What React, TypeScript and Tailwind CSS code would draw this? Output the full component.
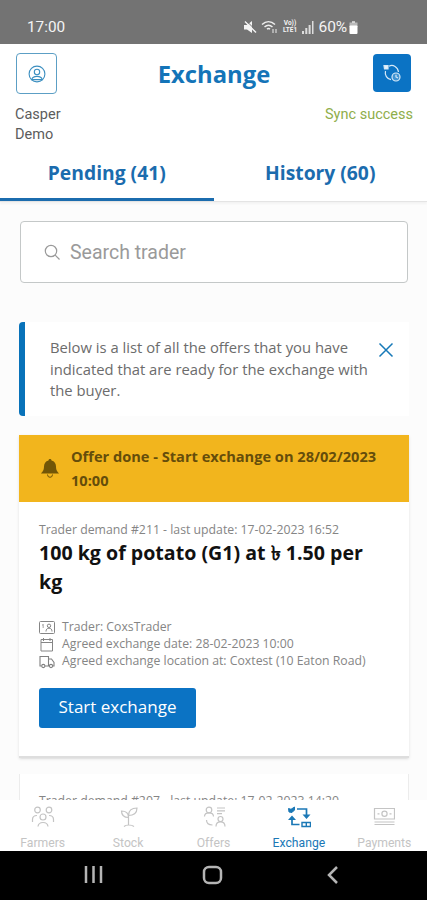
import { ReactNode, useState } from 'react';

type IconProps = { className?: string };

const UserIcon = () => (
  <svg width="18" height="18" viewBox="0 0 18 18" fill="none" stroke="#3c8fc0" strokeWidth="1.1">
    <circle cx="9" cy="9" r="7.9" />
    <circle cx="9" cy="7" r="2.7" />
    <path d="M3.8 14.6c.5-2.4 2.4-3.2 5.2-3.2s4.700.8 5.200 3.200z" />
  </svg>
);

const SyncIcon = () => (
  <svg width="20" height="20" viewBox="0 0 20 20" fill="none" stroke="#d6e9f7" strokeWidth="1.2">
    <path d="M7 3.200C11 1 16 4 16.500 9M3.500 8c-1 4 1.500 8 5.500 8.600" />
    <path d="M2 2.500h4v3.500H2.500z" fill="#e4f1fb" />
    <circle cx="14" cy="14" r="4" fill="#3f93d3" />
    <path d="M14 11.800V14l2 1" />
  </svg>
);

const FarmersIcon = ({ className }: IconProps) => (
  <svg className={className} width="24" height="22" viewBox="0 0 24 22" fill="none" stroke="currentColor" strokeWidth="1.2">
    <circle cx="6.500" cy="4" r="2.800" />
    <circle cx="18" cy="4" r="2.800" />
    <circle cx="12" cy="11" r="3" />
    <path d="M1.500 16v-2.500c0-2.500 1.500-4 4.500-4M22.500 16v-2.500c0-2.500-1.500-4-4.500-4M7 20.500c.3-2.700 2-4 5-4s4.700 1.300 5 4" />
  </svg>
);

const StockIcon = ({ className }: IconProps) => (
  <svg className={className} width="20" height="22" viewBox="0 0 20 22" fill="none" stroke="currentColor" strokeWidth="1.2">
    <path d="M10.500 19V9M10.500 11.500C6 11.500 3.500 9 3.500 5c4.500 0 7 2.500 7 6.500zM10.500 9.500c0-5 3-7.500 8.500-7.500 0 5.500-3.500 7.500-8.500 7.500zM6 20.500c2-2 7.500-2 10 0" />
  </svg>
);

const OffersIcon = ({ className }: IconProps) => (
  <svg className={className} width="24" height="22" viewBox="0 0 24 22" fill="none" stroke="currentColor" strokeWidth="1.2">
    <circle cx="7" cy="4" r="2.800" />
    <path d="M2.500 10.500c0-2.500 1.500-3.700 4.500-3.700s4.500 1.200 4.500 3.700M15 2h8M15 4.800h8M15 7.600h5" />
    <circle cx="18.500" cy="13" r="2.500" />
    <path d="M14 20.500c0-3 1.500-4.700 4.500-4.700s4.500 1.700 4.500 4.700M4.500 14c0 3.500 2 5 6 5" />
  </svg>
);

const ExchangeIcon = ({ className }: IconProps) => (
  <svg className={className} width="24" height="22" viewBox="0 0 24 22" fill="none" stroke="currentColor" strokeWidth="1.700">
    <path d="M10 3h9.500v7M5 13v5.500h7.500" />
    <path d="M15.500 8.500h8l-4 4.500zM1 14l4-4.500L9 14z" fill="currentColor" stroke="none" />
    <path d="M1.500 2.500l2.500.8L7.500 1v3L5 6.500 2 6z" fill="currentColor" strokeWidth="1" />
    <path d="M15 16.500h8.500v4H15zM19.300 16.500v4" strokeWidth="1.400" />
  </svg>
);

const PaymentsIcon = ({ className }: IconProps) => (
  <svg className={className} width="22" height="22" viewBox="0 0 22 22" fill="none" stroke="currentColor" strokeWidth="1.200">
    <path d="M1.500 2.500h20V13h-20zM1.500 16h20M1.500 18.500h20M4.500 7.800h2M16.500 7.800h2" />
    <circle cx="11.500" cy="7.800" r="2.600" />
  </svg>
);

const TraderIcon = () => (
  <svg width="16" height="14" viewBox="0 0 16 14" fill="none" stroke="#858585" strokeWidth="1">
    <rect x=".5" y=".5" width="15" height="12" rx="1" />
    <circle cx="10" cy="4.800" r="1.700" />
    <path d="M7 10.500c0-2 1-3.300 3-3.300s3 1.300 3 3.300M3 4h2M3.500 6h1.500" />
  </svg>
);

const CalendarIcon = () => (
  <svg width="16" height="14" viewBox="0 0 16 14" fill="none" stroke="#858585" strokeWidth="1">
    <path d="M2 1.500h11.500v11.500H2zM2 4.500h11.500M4.500 0v3M11 0v3" />
  </svg>
);

const TruckIcon = () => (
  <svg width="16" height="14" viewBox="0 0 16 14" fill="none" stroke="#808080" strokeWidth="1.100">
    <path d="M2.500 11H1V1.500h8.500V11H6M9.500 4h3L15 7.500V11h-1" />
    <circle cx="4.300" cy="11" r="1.600" />
    <circle cx="12" cy="11" r="1.600" />
  </svg>
);

const StatusBar = () => (
  <div className="h-11 shrink-0 bg-[#737373] flex items-center justify-between pl-[27px] pr-[69px] pt-[10px] text-[#f4f4f4]">
    <span className="text-[15.3px] leading-5">17:00</span>
    <div className="flex items-center">
      <svg width="14" height="14" viewBox="0 0 14 14" fill="#f4f4f4">
        <path d="M1 5h3l5-4v12L4 9.500H1z" />
        <path d="M2 1.500l11 11" stroke="#f4f4f4" strokeWidth="1.400" />
        <path d="M3.500 1l9.500 9.500" stroke="#737373" strokeWidth="1" />
      </svg>
      <svg className="ml-[4px]" width="17" height="14" viewBox="0 0 17 14" fill="none" stroke="#eee" strokeWidth="1.500">
        <path d="M1 4.500C5 .8 10 .8 14 4.500M3.500 7c2.500-2.200 5.500-2.200 8 0M6 9.200c1-.8 2-.8 3 0" />
        <path d="M12 9v4M15 9v4" strokeWidth="1" />
      </svg>
      <div className="ml-[4px] w-[17px] text-center text-[6.5px] font-bold">
        <div className="h-[7px] leading-[7px]">Vo))</div>
        <div className="h-[7px] leading-[7px]">LTE1</div>
      </div>
      <svg className="ml-[3px]" width="12" height="13" viewBox="0 0 12 13" fill="#ddd">
        <path d="M0 10h2v3H0zM3.300 7h2v6h-2zM6.600 4h2v9h-2zM10 0h1.500v13H10z" />
      </svg>
      <span className="ml-[5px] text-[15.5px] leading-5 tracking-[-0.1px]">60%</span>
      <svg className="ml-[2px]" width="9" height="13" viewBox="0 0 9 13" fill="#fff">
        <path d="M3 0h3v2H3z" opacity=".6" />
        <path d="M.5 1.500h8V6h-8z" opacity=".5" />
        <rect x=".5" y="4.500" width="8" height="8.500" rx="1" />
      </svg>
    </div>
  </div>
);

const Detail = ({ icon, children }: { icon: ReactNode; children: ReactNode }) => (
  <div className="flex items-center h-[17px]">
    {icon}
    <span className="ml-[7px] text-[12.26px] whitespace-nowrap">{children}</span>
  </div>
);

const navItems = [
  { name: 'Farmers', Icon: FarmersIcon },
  { name: 'Stock', Icon: StockIcon },
  { name: 'Offers', Icon: OffersIcon },
  { name: 'Exchange', Icon: ExchangeIcon },
  { name: 'Payments', Icon: PaymentsIcon },
];

const App = () => {
  const [tab, setTab] = useState('pending');
  const [showInfo, setShowInfo] = useState(true);

  return (
    <div className="w-[427px] h-[900px] flex flex-col overflow-hidden bg-[#fcfcfc] font-[Roboto,sans-serif]">
      <StatusBar />
      <header className="h-[102px] shrink-0 bg-white flex justify-between pl-[15px] pr-[14px] pt-[9px]">
        <div className="w-[100px]">
          <button className="ml-[1px] size-[41px] border border-[#5c9fc5] rounded-[4px] flex items-center justify-center">
            <UserIcon />
          </button>
          <p className="mt-[11px] w-[60px] text-[14.5px] leading-5 text-[#5c5c5c]">
            Casper Demo
          </p>
        </div>
        <h1 className="pt-[4px] font-['Open_Sans','Noto_Sans',sans-serif] font-bold text-[23.8px] leading-[34px] text-[#1474b8]">
          Exchange
        </h1>
        <div className="w-[100px] flex flex-col items-end">
          <button className="mt-[1px] mr-[2px] size-[38px] bg-[#0b73c4] rounded-[4px] flex items-center justify-center">
            <SyncIcon />
          </button>
          <p className="mt-[13px] text-[14.5px] leading-5 whitespace-nowrap text-[#8fae4b]">
            Sync success
          </p>
        </div>
      </header>
      <div className="h-[56px] shrink-0 flex bg-white border-b border-[#e4e4e4] shadow-[0_2px_2px_rgba(0,0,0,0.04)] font-['Open_Sans','Noto_Sans',sans-serif] font-bold text-[19.3px] text-[#1b6cae]">
        <button
          className={`flex-1 pt-[2px] border-b-[3px] ${tab === 'pending' ? 'border-[#1b6cae]' : 'border-transparent'}`}
          onClick={() => setTab('pending')}
        >
          Pending (41)
        </button>
        <button
          className={`flex-1 pt-[2px] border-b-[3px] ${tab === 'history' ? 'border-[#1b6cae]' : 'border-transparent'}`}
          onClick={() => setTab('history')}
        >
          History (60)
        </button>
      </div>
      <main className="flex-1 min-h-0 overflow-hidden pl-[19px] pr-[18px] pt-[19px] font-['Open_Sans','Noto_Sans',sans-serif]">
        <div className="mx-[1px] h-[62px] border border-[#c4c8c8] rounded-[4px] bg-white flex items-center pl-[23px] text-[#9a9a9a]">
          <svg width="17" height="17" viewBox="0 0 17 17" fill="none" stroke="currentColor" strokeWidth="1.200">
            <circle cx="7" cy="7" r="5.700" />
            <path d="M11.200 11.200l4.300 4.300" />
          </svg>
          <span className="ml-[9px] pt-[1px] font-[Roboto,sans-serif] text-[19.5px]">Search trader</span>
        </div>
        {showInfo && (
          <div className="mt-[39px] h-[94px] bg-white border-l-[6px] border-[#0872b9] rounded-l-[4px] flex justify-between pl-[25px] pr-[15px] pt-[15px]">
            <p className="w-[325px] text-[14.8px] leading-[21.700px] text-[#6c6c6c]">
              Below is a list of all the offers that you have indicated that are ready for the exchange with the buyer.
            </p>
            <button className="mt-[5px] h-[16px]" onClick={() => setShowInfo(false)}>
              <svg width="16" height="16" viewBox="0 0 16 16" stroke="#1779b8" strokeWidth="1.500">
                <path d="M1.500 1.500l13 13M14.500 1.500l-13 13" />
              </svg>
            </button>
          </div>
        )}
        <div className="mt-[19px] h-[323px] bg-white border-b-2 border-[#dedede] shadow-sm">
          <div className="h-[67px] bg-[#f2b51d] flex items-center pb-[2px] pl-[21px] text-[#654d0b]">
            <svg className="mt-[2px]" width="20" height="22" viewBox="0 0 20 22" fill="#725607">
              <path d="M10 1c1 0 1.500.6 1.500 1.500 3 .7 4.500 3 4.500 6 0 4 1.500 5 3 7H1c1.500-2 3-3 3-7 0-3 1.500-5.300 4.500-6C8.500 1.600 9 1 10 1z" />
              <path d="M7.500 16.500a2.500 2.800 0 0 0 5 0" fill="none" stroke="#725607" />
            </svg>
            <p className="ml-[11px] w-[320px] font-bold text-[14.6px] leading-6">
              Offer done - Start exchange on 28/02/2023 10:00
            </p>
          </div>
          <div className="px-5 pt-[19px] text-[#858585]">
            <p className="text-[12.27px] leading-[18px] whitespace-nowrap">
              Trader demand #211 - last update: 17-02-2023 16:52
            </p>
            <h2 className="-mt-px w-[335px] font-bold text-[19.6px] leading-[29px] text-[#111]">
              100 kg of potato (G1) at ৳ 1.50 per kg
            </h2>
            <div className="mt-[23px]">
              <Detail icon={<TraderIcon />}>Trader: CoxsTrader</Detail>
              <Detail icon={<CalendarIcon />}>Agreed exchange date: 28-02-2023 10:00</Detail>
              <Detail icon={<TruckIcon />}>Agreed exchange location at: Coxtest (10 Eaton Road)</Detail>
            </div>
            <button className="mt-[18px] w-[157px] h-[40px] pb-[2px] rounded-[3px] bg-[#0b73c4] text-white text-[17px] font-medium">
              Start exchange
            </button>
          </div>
        </div>
        <div className="mt-[16px] h-[200px] bg-white border-x border-[#ececec] px-[19px] pt-[18px]">
          <p className="text-[12.27px] leading-[18px] whitespace-nowrap text-[#858585]">
            Trader demand #207 - last update: 17-02-2023 14:20
          </p>
        </div>
      </main>
      <nav className="h-[51px] shrink-0 flex bg-white">
        {navItems.map(({ name, Icon }) => (
          <div
            key={name}
            className={`flex-1 flex flex-col items-center pt-[6px] text-[12.2px] ${name === 'Exchange' ? 'text-[#1b78b6]' : 'text-[#c4c4c4]'}`}
          >
            <Icon />
            <span className="mt-[7px] leading-[16px]">{name}</span>
          </div>
        ))}
      </nav>
      <div className="h-[49px] shrink-0 bg-black">
        <svg width="427" height="49" viewBox="0 0 427 49" fill="none" stroke="#b5b5b5" strokeWidth="2.500">
          <path d="M86 15v17M93.500 15v17M101 15v17" />
          <rect x="204" y="16" width="17" height="16" rx="5" />
          <path d="M337 16l-8 8 8 8" />
        </svg>
      </div>
    </div>
  );
};

export default App;
